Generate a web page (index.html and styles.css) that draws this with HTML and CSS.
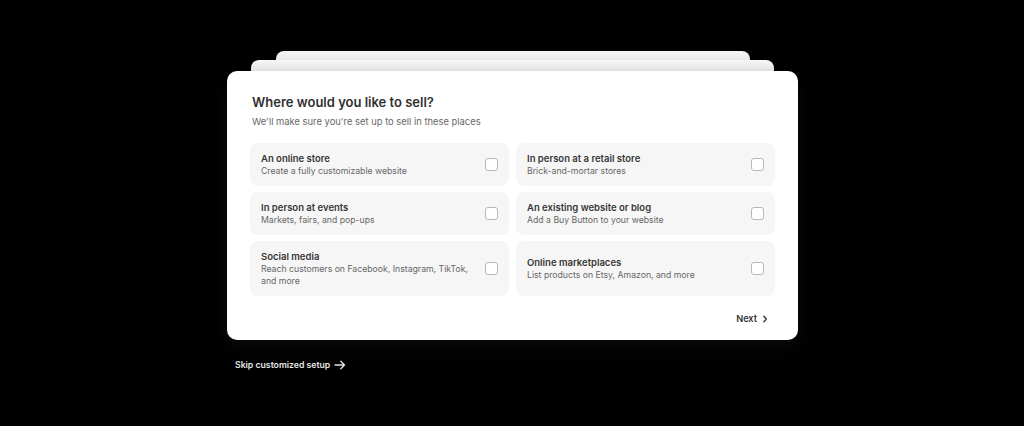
FILE: index.html
```html
<!DOCTYPE html>
<html lang="en">
<head>
<meta charset="utf-8">
<title>Where would you like to sell?</title>
<link rel="stylesheet" href="styles.css">
</head>
<body>
<main class="page">
  <div class="stack">
    <div class="ghost ghost-back"></div>
    <div class="ghost ghost-mid"></div>
    <section class="card">
      <h1 class="title">Where would you like to sell?</h1>
      <p class="subtitle">We'll make sure you're set up to sell in these places</p>
      <div class="options">
        <label class="option">
          <span class="option-text">
            <span class="option-title">An online store</span>
            <span class="option-desc">Create a fully customizable website</span>
          </span>
          <span class="check"></span>
        </label>
        <label class="option">
          <span class="option-text">
            <span class="option-title">In person at a retail store</span>
            <span class="option-desc">Brick-and-mortar stores</span>
          </span>
          <span class="check"></span>
        </label>
        <label class="option">
          <span class="option-text">
            <span class="option-title">In person at events</span>
            <span class="option-desc">Markets, fairs, and pop-ups</span>
          </span>
          <span class="check"></span>
        </label>
        <label class="option">
          <span class="option-text">
            <span class="option-title">An existing website or blog</span>
            <span class="option-desc">Add a Buy Button to your website</span>
          </span>
          <span class="check"></span>
        </label>
        <label class="option">
          <span class="option-text">
            <span class="option-title">Social media</span>
            <span class="option-desc">Reach customers on Facebook, Instagram, TikTok, and more</span>
          </span>
          <span class="check"></span>
        </label>
        <label class="option">
          <span class="option-text">
            <span class="option-title">Online marketplaces</span>
            <span class="option-desc">List products on Etsy, Amazon, and more</span>
          </span>
          <span class="check"></span>
        </label>
      </div>
      <div class="footer">
        <button class="next" type="button">Next
          <svg class="chev" width="8" height="10" viewBox="0 0 8 10" aria-hidden="true"><path d="M2.8 2.2 L5.4 5 L2.8 7.8" fill="none" stroke="#3a3a3a" stroke-width="1.4" stroke-linecap="round" stroke-linejoin="round"/></svg>
        </button>
      </div>
    </section>
  </div>
  <a class="skip" href="#">Skip customized setup
    <svg class="arrow" width="12" height="10" viewBox="0 0 12 10" aria-hidden="true"><path d="M1 5 H10.5 M6.8 1.3 L10.5 5 L6.8 8.7" fill="none" stroke="#e6e6e6" stroke-width="1.3" stroke-linecap="round" stroke-linejoin="round"/></svg>
  </a>
</main>
</body>
</html>
```

FILE: styles.css
```css
* { box-sizing: border-box; }
html, body {
  margin: 0;
  padding: 0;
  background: #000;
  height: 100%;
}
body {
  font-family: Inter, "Noto Sans", "Liberation Sans", sans-serif;
  color: #303030;
  overflow: hidden;
}
.page {
  width: 571px;
  margin-left: 227px;
  padding-top: 51px;
}
.stack {
  display: flex;
  flex-direction: column;
}
.ghost {
  border-radius: 8px 8px 0 0;
}
.ghost-back {
  height: 9px;
  margin: 0 48px 0 49px;
  background: linear-gradient(#f7f7f7, #e9e9e9);
}
.ghost-mid {
  height: 11px;
  margin: 0 24px;
  background: linear-gradient(#f8f8f8, #ebebeb);
}
.card {
  background: #fff;
  border-radius: 10px;
  padding: 20px 23px 10px 23px;
  box-shadow: 0 8px 20px rgba(40, 40, 40, 0.25);
}
.title {
  margin: 0 0 0 2px;
  font-size: 13px;
  line-height: 22px;
  font-weight: 620;
  color: #303030;
}
.subtitle {
  margin: 2px 0 0 2px;
  font-size: 9.4px;
  line-height: 14px;
  color: #666666;
}
.options {
  margin-top: 14px;
  display: grid;
  grid-template-columns: 1fr 1fr;
  gap: 6px 7px;
}
.option {
  display: flex;
  align-items: center;
  gap: 12px;
  background: #f6f6f6;
  border-radius: 8px;
  padding: 9px 11px;
  min-height: 43px;
  cursor: pointer;
}
.option-text {
  flex: 1;
  display: flex;
  flex-direction: column;
}
.option-title {
  font-size: 9.5px;
  line-height: 13px;
  font-weight: 560;
  color: #363636;
}
.option-desc {
  font-size: 8.7px;
  line-height: 12px;
  color: #666666;
}
.check {
  flex: none;
  width: 13px;
  height: 13px;
  border: 1px solid #b8b8b8;
  border-radius: 3px;
  background: #fff;
}
.footer {
  display: flex;
  justify-content: flex-end;
  margin-top: 12px;
}
.next {
  display: flex;
  align-items: center;
  gap: 4px;
  background: none;
  border: 0;
  padding: 4px 6px 4px 4px;
  font-family: inherit;
  font-size: 9.2px;
  line-height: 14px;
  font-weight: 560;
  color: #363636;
  cursor: pointer;
}
.chev { display: block; }
.skip {
  display: inline-flex;
  align-items: center;
  gap: 4px;
  margin-top: 18px;
  margin-left: 8px;
  font-size: 8.7px;
  line-height: 14px;
  font-weight: 600;
  color: #e6e6e6;
  text-decoration: none;
}
.arrow { display: block; }
```
